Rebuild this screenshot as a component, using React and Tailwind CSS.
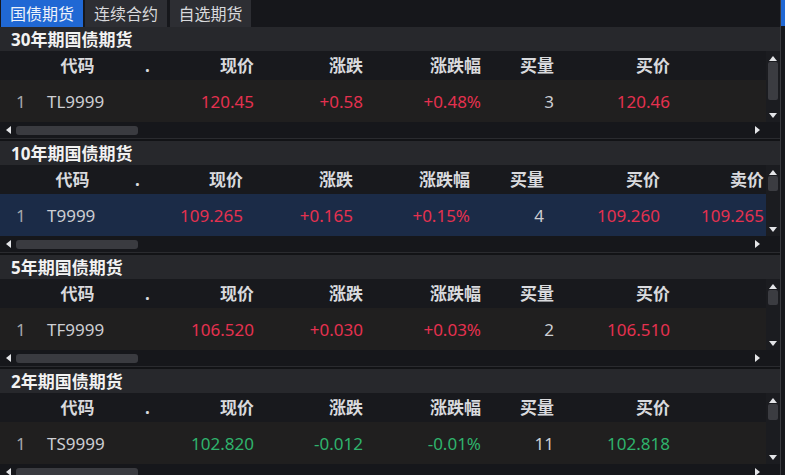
import React from 'react';

const RED = 'text-[#e5314f]';
const GREEN = 'text-[#2fb36c]';

const narrowCols = {
  idx: 'w-[35px]',
  code: 'w-[85px]',
  dot: 'w-[55px]',
  nums: ['w-[79px]', 'w-[109px]', 'w-[118px]', 'w-[73px]', 'w-[116px]'],
};

const wideCols = {
  idx: 'w-[35px]',
  code: 'w-[75px]',
  dot: 'w-[55px]',
  nums: ['w-[78px]', 'w-[110px]', 'w-[117px]', 'w-[74px]', 'w-[116px]', 'w-[104px]'],
};

const sections = [
  {
    title: '30年期国债期货',
    cols: narrowCols,
    heads: ['现价', '涨跌', '涨跌幅', '买量', '买价'],
    code: 'TL9999',
    values: ['120.45', '+0.58', '+0.48%', '3', '120.46'],
    up: true,
    thumb: 'h-[38px]',
  },
  {
    title: '10年期国债期货',
    cols: wideCols,
    heads: ['现价', '涨跌', '涨跌幅', '买量', '买价', '卖价'],
    code: 'T9999',
    values: ['109.265', '+0.165', '+0.15%', '4', '109.260', '109.265'],
    up: true,
    selected: true,
    thumb: 'h-[15px]',
  },
  {
    title: '5年期国债期货',
    cols: narrowCols,
    heads: ['现价', '涨跌', '涨跌幅', '买量', '买价'],
    code: 'TF9999',
    values: ['106.520', '+0.030', '+0.03%', '2', '106.510'],
    up: true,
    thumb: 'h-[15px]',
  },
  {
    title: '2年期国债期货',
    cols: narrowCols,
    heads: ['现价', '涨跌', '涨跌幅', '买量', '买价'],
    code: 'TS9999',
    values: ['102.820', '-0.012', '-0.01%', '11', '102.818'],
    up: false,
    thumb: 'h-[16px]',
  },
];

const Arrow = ({ dir }) => {
  const pts = {
    up: '0,5 4,0 8,5',
    down: '0,0 8,0 4,5',
    left: '5,0 5,8 0,4',
    right: '0,0 5,4 0,8',
  }[dir];
  const vertical = dir === 'up' || dir === 'down';
  return (
    <svg width={vertical ? 8 : 5} height={vertical ? 5 : 8} className="block">
      <polygon points={pts} fill="#e4e5e8" />
    </svg>
  );
};

const Section = ({ s }) => {
  const { cols } = s;
  const color = s.up ? RED : GREEN;

  return (
    <div className="flex flex-col shrink-0">
      <div className="h-[24px] bg-[#27282c] pl-[11px] flex items-center text-[17px] font-bold text-[#f2f2f2] leading-none">
        {s.title}
      </div>

      <div className="flex h-[71px]">
        <div className="w-[766px] flex flex-col overflow-hidden">
          <div className="h-[29px] bg-[#18191d] flex items-center text-[17px] font-bold text-[#d9dadd] leading-none whitespace-nowrap">
            <div className={`${cols.idx} shrink-0`}></div>
            <div className={`${cols.code} shrink-0 text-center`}>代码</div>
            <div className={`${cols.dot} shrink-0 text-center`}>.</div>
            {s.heads.map((h, i) => (
              <div key={h} className={`${cols.nums[i]} shrink-0 text-right`}>{h}</div>
            ))}
          </div>

          <div
            className={`h-[42px] flex items-center text-[17px] leading-none whitespace-nowrap ${
              s.selected ? 'bg-[#1b2b47]' : 'bg-[#201f1f]'
            }`}
          >
            <div className={`${cols.idx} shrink-0 pl-[16px] text-[#a7a8ac]`}>1</div>
            <div className={`${cols.code} shrink-0 pl-[12px] text-[#cdced2]`}>{s.code}</div>
            <div className={`${cols.dot} shrink-0`}></div>
            {s.values.map((v, i) => (
              <div
                key={i}
                className={`${cols.nums[i]} shrink-0 text-right ${i === 3 ? 'text-[#cdced2]' : color}`}
              >
                {v}
              </div>
            ))}
          </div>
        </div>

        <div className="w-[14px] bg-[#1b1c20] flex flex-col items-center pt-[5px] pb-[4px]">
          <Arrow dir="up" />
          <div className={`${s.thumb} w-[10px] mt-[1px] rounded-[2px] bg-[#3b3c41]`}></div>
          <div className="flex-1"></div>
          <Arrow dir="down" />
        </div>
      </div>

      <div className="flex h-[16px] bg-[#16171b]">
        <div className="w-[766px] flex items-center pl-[6px] pr-[6px]">
          <Arrow dir="left" />
          <div className="ml-[5px] w-[122px] h-[9px] rounded-[3px] bg-[#3a3b40]"></div>
          <div className="flex-1"></div>
          <Arrow dir="right" />
        </div>
        <div className="w-[14px]"></div>
      </div>

      <div className="h-[3px] bg-[#121316] border-t border-[#2a2b2f]"></div>
    </div>
  );
};

const App = () => {
  return (
    <div className="w-[785px] h-[475px] overflow-hidden bg-[#16171b] flex font-['Noto_Sans','Noto_Sans_CJK_SC',sans-serif]">
      <div className="w-[780px] flex flex-col">
        <div className="h-[27px] shrink-0 flex items-stretch pl-[1px] text-[16px] leading-none">
          <div className="w-[82px] bg-[#2068d4] text-[#eef3fb] flex items-center justify-center">国债期货</div>
          <div className="w-[82px] ml-[2px] bg-[#2d2e33] text-[#d8d9dc] flex items-center justify-center">连续合约</div>
          <div className="w-[81px] ml-[3px] bg-[#2d2e33] text-[#d8d9dc] flex items-center justify-center">自选期货</div>
        </div>

        {sections.map((s) => (
          <Section key={s.title} s={s} />
        ))}
      </div>

      <div className="w-px bg-[#3a3b40]"></div>
      <div className="w-[4px] flex flex-col">
        <div className="h-[26px] bg-[#2068d4]"></div>
      </div>
    </div>
  );
};

export default App;
